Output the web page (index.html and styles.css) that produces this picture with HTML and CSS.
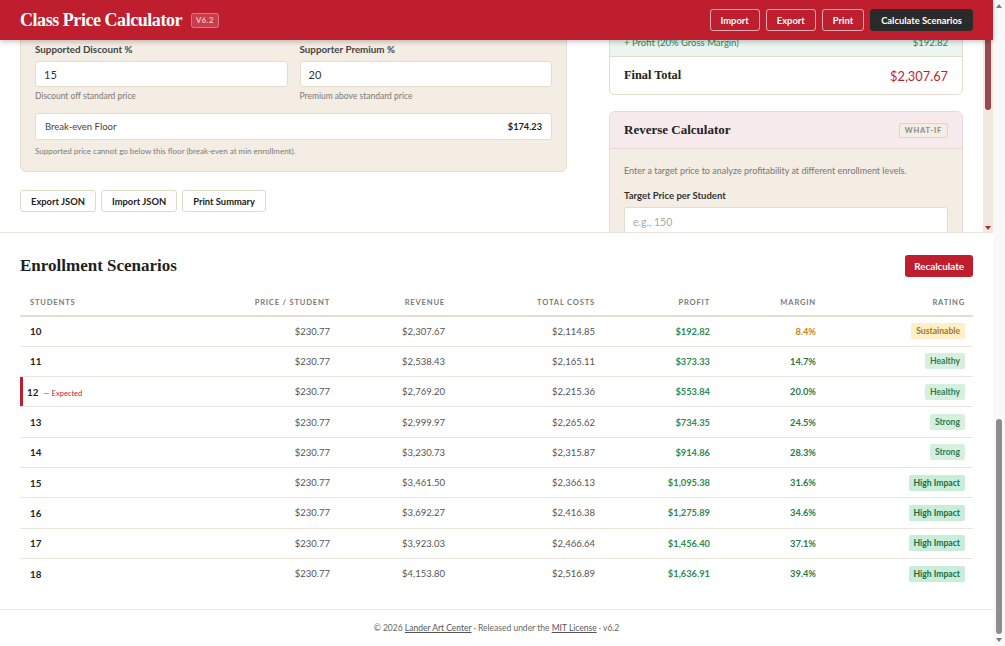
FILE: index.html
```html
<!DOCTYPE html>
<html lang="en">
<head>
<meta charset="utf-8">
<title>Class Price Calculator</title>
<link rel="stylesheet" href="styles.css">
</head>
<body>
<div class="shell">
  <div class="page">
    <header class="topbar">
      <div class="brand">
        <h1 class="brand-title">Class Price Calculator</h1>
        <span class="version">V6.2</span>
      </div>
      <nav class="top-actions">
        <button class="btn-ghost">Import</button>
        <button class="btn-ghost">Export</button>
        <button class="btn-ghost">Print</button>
        <button class="btn-dark">Calculate Scenarios</button>
      </nav>
    </header>

    <main class="workspace">
      <div class="workspace-view">
        <div class="workspace-grid">
          <section class="left-col">
            <div class="panel">
              <div class="field-row">
                <div class="field">
                  <label class="field-label">Supported Discount %</label>
                  <input class="field-input" type="text" value="15">
                  <p class="field-hint">Discount off standard price</p>
                </div>
                <div class="field">
                  <label class="field-label">Supporter Premium %</label>
                  <input class="field-input" type="text" value="20">
                  <p class="field-hint">Premium above standard price</p>
                </div>
              </div>
              <div class="floor-box">
                <span class="floor-label">Break-even Floor</span>
                <strong class="floor-value">$174.23</strong>
              </div>
              <p class="field-hint floor-hint">Supported price cannot go below this floor (break-even at min enrollment).</p>
            </div>
            <div class="file-actions">
              <button class="btn-light">Export JSON</button>
              <button class="btn-light">Import JSON</button>
              <button class="btn-light">Print Summary</button>
            </div>
          </section>

          <aside class="right-col">
            <div class="summary-card">
              <div class="sum-row profit"><span>+ Profit (20% Gross Margin)</span><span>$192.82</span></div>
              <div class="sum-row total"><span class="total-label">Final Total</span><span class="total-value">$2,307.67</span></div>
            </div>

            <div class="reverse-card">
              <div class="reverse-head">
                <h2 class="card-title">Reverse Calculator</h2>
                <span class="whatif">WHAT-IF</span>
              </div>
              <div class="reverse-body">
                <p class="reverse-intro">Enter a target price to analyze profitability at different enrollment levels.</p>
                <label class="field-label reverse-label">Target Price per Student</label>
                <input class="field-input reverse-input" type="text" placeholder="e.g., 150">
              </div>
            </div>
          </aside>
        </div>
      </div>
      <div class="ws-bar" aria-hidden="true">
        <div class="ws-thumb"></div>
        <div class="ws-down"></div>
      </div>
    </main>

    <section class="scenarios">
      <div class="scen-head">
        <h2 class="scen-title">Enrollment Scenarios</h2>
        <button class="btn-red">Recalculate</button>
      </div>
      <table class="scen-table">
        <colgroup>
          <col class="c1"><col class="c2"><col class="c3"><col class="c4"><col class="c5"><col class="c6"><col class="c7">
        </colgroup>
        <thead>
          <tr><th>Students</th><th>Price / Student</th><th>Revenue</th><th>Total Costs</th><th>Profit</th><th>Margin</th><th>Rating</th></tr>
        </thead>
        <tbody>
          <tr><td>10</td><td>$230.77</td><td>$2,307.67</td><td>$2,114.85</td><td>$192.82</td><td class="m-warn">8.4%</td><td><span class="badge sustainable">Sustainable</span></td></tr>
          <tr><td>11</td><td>$230.77</td><td>$2,538.43</td><td>$2,165.11</td><td>$373.33</td><td>14.7%</td><td><span class="badge healthy">Healthy</span></td></tr>
          <tr class="expected"><td>12 <span class="exp-tag">— Expected</span></td><td>$230.77</td><td>$2,769.20</td><td>$2,215.36</td><td>$553.84</td><td>20.0%</td><td><span class="badge healthy">Healthy</span></td></tr>
          <tr><td>13</td><td>$230.77</td><td>$2,999.97</td><td>$2,265.62</td><td>$734.35</td><td>24.5%</td><td><span class="badge healthy">Strong</span></td></tr>
          <tr><td>14</td><td>$230.77</td><td>$3,230.73</td><td>$2,315.87</td><td>$914.86</td><td>28.3%</td><td><span class="badge healthy">Strong</span></td></tr>
          <tr><td>15</td><td>$230.77</td><td>$3,461.50</td><td>$2,366.13</td><td>$1,095.38</td><td>31.6%</td><td><span class="badge impact">High Impact</span></td></tr>
          <tr><td>16</td><td>$230.77</td><td>$3,692.27</td><td>$2,416.38</td><td>$1,275.89</td><td>34.6%</td><td><span class="badge impact">High Impact</span></td></tr>
          <tr><td>17</td><td>$230.77</td><td>$3,923.03</td><td>$2,466.64</td><td>$1,456.40</td><td>37.1%</td><td><span class="badge impact">High Impact</span></td></tr>
          <tr><td>18</td><td>$230.77</td><td>$4,153.80</td><td>$2,516.89</td><td>$1,636.91</td><td>39.4%</td><td><span class="badge impact">High Impact</span></td></tr>
        </tbody>
      </table>
    </section>

    <footer class="footer">
      <p>© 2026 <a href="#">Lander Art Center</a> · Released under the <a href="#">MIT License</a> · v6.2</p>
    </footer>
  </div>

  <div class="pagebar" aria-hidden="true">
    <div class="pb-up"></div>
    <div class="pb-thumb"></div>
    <div class="pb-down"></div>
  </div>
</div>
</body>
</html>
```

FILE: styles.css
```css
* { box-sizing: border-box; margin: 0; padding: 0; }
html, body { height: 100%; }
body {
  font-family: Lato, "Noto Sans", "Liberation Sans", Arial, sans-serif;
  color: #333;
  background: #fff;
  overflow: hidden;
}
button, input { font-family: inherit; }

.shell { display: flex; height: 646px; }
.page { flex: 1; min-width: 0; display: flex; flex-direction: column; }

/* Header */
.topbar {
  position: relative;
  z-index: 2;
  flex: none;
  height: 40px;
  background: #be1e2d;
  display: flex;
  align-items: center;
  justify-content: space-between;
  padding: 0 20px;
  box-shadow: 0 2px 5px rgba(0, 0, 0, 0.22);
}
.brand { display: flex; align-items: center; gap: 9px; }
.brand-title {
  font-family: "Liberation Serif", "Times New Roman", serif;
  font-weight: 700;
  font-size: 18px;
  letter-spacing: -0.45px;
  color: #fff;
  line-height: 1;
}
.version {
  font-size: 7.5px;
  font-weight: 700;
  letter-spacing: 0.5px;
  color: rgba(255, 255, 255, 0.72);
  background: rgba(255, 255, 255, 0.14);
  border: 1px solid rgba(255, 255, 255, 0.3);
  border-radius: 3px;
  padding: 0 4px;
  line-height: 13px;
}
.top-actions { display: flex; gap: 6px; }
.btn-ghost, .btn-dark {
  height: 22px;
  padding: 0 10px;
  border-radius: 3px;
  font-size: 9.4px;
  font-weight: 700;
  color: #fff;
}
.btn-ghost { background: transparent; border: 1px solid rgba(255, 255, 255, 0.62); }
.btn-dark { background: #2b2b2b; border: 1px solid #2b2b2b; }

/* Upper workspace (scrolled region) */
.workspace {
  flex: none;
  height: 193px;
  display: flex;
  border-bottom: 1px solid #ebe3d8;
}
.workspace-view { flex: 1 1 auto; min-width: 0; overflow: hidden; }
.ws-bar {
  flex: 0 0 10px;
  width: 10px;
  background: #f1e9df;
  display: flex;
  flex-direction: column;
  align-items: center;
}
.ws-thumb {
  display: block;
  flex: none;
  width: 6px;
  height: 70px;
  background: #9a4850;
  border-radius: 0 0 3px 3px;
}
.ws-down {
  display: block;
  flex: none;
  margin-top: auto;
  margin-bottom: 2px;
  width: 0;
  height: 0;
  border-left: 3px solid transparent;
  border-right: 3px solid transparent;
  border-top: 4px solid #b02a36;
}

.workspace-grid {
  display: grid;
  grid-template-columns: minmax(0, 1fr) 354px;
  column-gap: 42px;
  align-items: start;
  padding: 0 20px;
  margin-top: -12px;
}

.panel {
  background: #f3ede4;
  border: 1px solid #e6ddd0;
  border-radius: 6px;
  padding: 13px 14px 14px;
}
.field-row { display: grid; grid-template-columns: 1fr 1fr; column-gap: 12px; }
.field-label {
  display: block;
  font-size: 9.8px;
  font-weight: 700;
  color: #444;
  line-height: 14px;
  margin-bottom: 5px;
}
.field-input {
  display: block;
  width: 100%;
  height: 26px;
  background: #fff;
  border: 1px solid #e6ddd0;
  border-radius: 3px;
  padding: 0 8px;
  font-size: 11px;
  color: #333;
  outline: none;
}
.field-input::placeholder { color: #a9a9a9; }
.field-hint {
  font-size: 8.5px;
  color: #7a7a7a;
  line-height: 12px;
  margin-top: 3px;
}
.floor-box {
  margin-top: 11px;
  height: 27px;
  background: #fff;
  border: 1px solid #e6ddd0;
  border-radius: 3px;
  display: flex;
  align-items: center;
  justify-content: space-between;
  padding: 0 9px;
  font-size: 9.5px;
  color: #444;
}
.floor-value { font-weight: 700; color: #222; font-size: 9.2px; }
.floor-hint { margin-top: 5px; font-size: 8px; }

.file-actions { display: flex; gap: 5px; margin-top: 18px; }
.btn-light {
  height: 22px;
  padding: 0 10px;
  background: #fff;
  border: 1px solid #e2d8ca;
  border-radius: 3px;
  font-size: 9.4px;
  font-weight: 700;
  color: #222;
}

/* Right column */
.summary-card {
  background: #fff;
  border: 1px solid #e6ddd0;
  border-radius: 6px;
  overflow: hidden;
}
.sum-row {
  display: flex;
  justify-content: space-between;
  align-items: center;
  padding: 0 14px;
}
.sum-row.profit {
  height: 28px;
  background: #eaf6ef;
  color: #2e8b57;
  font-size: 9.5px;
  border-bottom: 1px solid #e6ddd0;
}
.sum-row.total { height: 37px; }
.total-label {
  font-family: "Liberation Serif", "Times New Roman", serif;
  font-weight: 700;
  font-size: 12.3px;
  color: #222;
}
.total-value { font-size: 12.8px; color: #be1e2d; }

.reverse-card {
  margin-top: 16px;
  background: #f3ede4;
  border: 1px solid #ead8da;
  border-radius: 6px;
  overflow: hidden;
}
.reverse-head {
  height: 37px;
  background: #f6eaec;
  border-bottom: 1px solid #ead8da;
  display: flex;
  align-items: center;
  justify-content: space-between;
  padding: 0 14px;
}
.card-title {
  font-family: "Liberation Serif", "Times New Roman", serif;
  font-weight: 700;
  font-size: 13px;
  color: #222;
}
.whatif {
  font-size: 7.5px;
  font-weight: 700;
  letter-spacing: 0.8px;
  color: #8a8a8a;
  background: #f3ede4;
  border: 1px solid #e4cfd3;
  border-radius: 2px;
  padding: 0 5px;
  line-height: 13px;
}
.reverse-body { padding: 15px 14px 20px; }
.reverse-intro { font-size: 9px; color: #777; line-height: 14px; }
.reverse-label { margin-top: 11px; font-size: 9.5px; color: #333; margin-bottom: 4px; }
.reverse-input { height: 30px; font-size: 10.5px; }

/* Scenarios */
.scenarios { flex: 1; padding: 0 20px; }
.scen-head {
  display: flex;
  align-items: center;
  justify-content: space-between;
  margin-top: 22px;
}
.scen-title {
  font-family: "Liberation Serif", "Times New Roman", serif;
  font-weight: 700;
  font-size: 17px;
  color: #1f1f1f;
}
.btn-red {
  height: 22px;
  padding: 0 9px;
  background: #be1e2d;
  border: none;
  border-radius: 3px;
  color: #fff;
  font-size: 9.8px;
  font-weight: 700;
}

.scen-table {
  width: 100%;
  margin-top: 11px;
  border-collapse: collapse;
  table-layout: fixed;
}
.c1 { width: 180px; }
.c2 { width: 138px; }
.c3 { width: 115px; }
.c4 { width: 150px; }
.c5 { width: 115px; }
.c6 { width: 106px; }
.c7 { width: 149px; }
.scen-table th {
  height: 28px;
  padding: 0 8px;
  text-align: right;
  font-size: 7.6px;
  font-weight: 700;
  letter-spacing: 0.8px;
  text-transform: uppercase;
  color: #7a7a7a;
  border-bottom: 2px solid #e6ddd0;
}
.scen-table th:first-child { text-align: left; padding-left: 10px; }
.scen-table td {
  height: 30.3px;
  padding: 0 8px;
  text-align: right;
  font-size: 9.5px;
  color: #555;
  border-bottom: 1px solid #ece5db;
  white-space: nowrap;
}
.scen-table tbody tr:last-child td { border-bottom: none; }
.scen-table td:first-child {
  text-align: left;
  padding-left: 10px;
  font-weight: 700;
  font-size: 9.8px;
  color: #222;
}
.scen-table td:nth-child(5) { color: #2e8b57; font-weight: 700; font-size: 9.3px; }
.scen-table td:nth-child(6) { color: #2c7a4b; font-weight: 700; font-size: 9.3px; }
.scen-table td.m-warn { color: #c8841c; }
.scen-table tr.expected td:first-child {
  padding-left: 7px;
  box-shadow: inset 3px 0 0 #be1e2d;
}
.exp-tag {
  font-size: 7.5px;
  font-weight: 400;
  color: #be1e2d;
  margin-left: 3px;
}
.badge {
  display: inline-block;
  font-size: 8.6px;
  font-weight: 700;
  line-height: 16px;
  padding: 0 5px;
  border-radius: 2px;
}
.badge.sustainable { background: #fdf0c6; color: #a8761a; }
.badge.healthy { background: #d7efdf; color: #2e7d52; }
.badge.impact { background: #c8eed9; color: #216b45; }

/* Footer */
.footer {
  flex: none;
  height: 37px;
  border-top: 1px solid #ece5db;
  display: flex;
  align-items: center;
  justify-content: center;
  font-size: 8.5px;
  color: #666;
}
.footer a { color: #555; }

/* Page scrollbar */
.pagebar {
  flex: none;
  width: 12px;
  background: #f8f8f8;
  display: flex;
  flex-direction: column;
  align-items: center;
}
.pb-up {
  flex: none;
  margin-top: 4px;
  width: 0;
  height: 0;
  border-left: 3px solid transparent;
  border-right: 3px solid transparent;
  border-bottom: 4px solid #7c7c7c;
}
.pb-thumb {
  flex: none;
  margin-top: auto;
  width: 6px;
  height: 215px;
  background: #8d8d8d;
  border-radius: 3px;
}
.pb-down {
  flex: none;
  margin: 4px 0;
  width: 0;
  height: 0;
  border-left: 3px solid transparent;
  border-right: 3px solid transparent;
  border-top: 4px solid #7c7c7c;
}
```
